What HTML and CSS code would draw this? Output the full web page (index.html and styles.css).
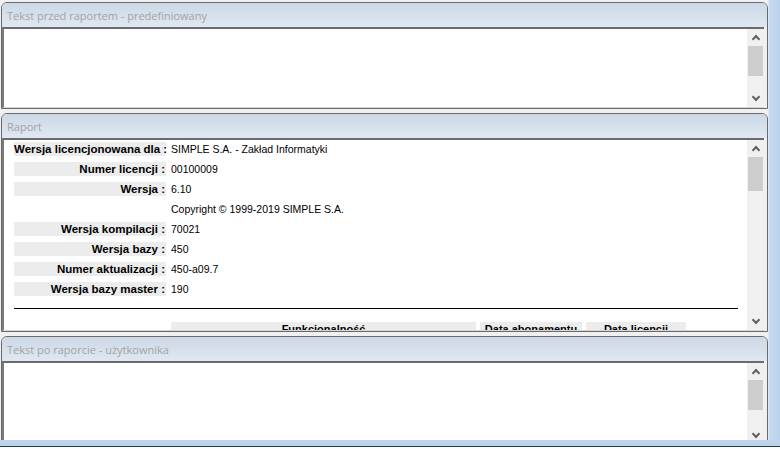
FILE: index.html
```html
<!DOCTYPE html>
<html lang="pl">
<head>
    <meta charset="UTF-8">
    <title>Raport</title>
    <link rel="stylesheet" href="styles.css">
</head>
<body>
    <div class="screen">
        <div class="main">
            <!-- tekst przed raportem -->
            <div class="panel panel-top">
                <div class="panel-title">Tekst przed raportem - predefiniowany</div>
                <div class="panel-body">
                    <div class="area"></div>
                    <div class="scrollbar">
                        <span class="arrow up"></span>
                        <span class="thumb"></span>
                        <span class="arrow down"></span>
                    </div>
                </div>
            </div>

            <!-- raport -->
            <div class="panel panel-report">
                <div class="panel-title">Raport</div>
                <div class="panel-body">
                    <div class="area report">
                        <div class="row"><span class="label">Wersja licencjonowana dla :</span><span class="value">SIMPLE S.A. - Zakład Informatyki</span></div>
                        <div class="row"><span class="label">Numer licencji :</span><span class="value">00100009</span></div>
                        <div class="row"><span class="label">Wersja :</span><span class="value">6.10</span></div>
                        <div class="row"><span class="label empty"></span><span class="value">Copyright © 1999-2019 SIMPLE S.A.</span></div>
                        <div class="row"><span class="label">Wersja kompilacji :</span><span class="value">70021</span></div>
                        <div class="row"><span class="label">Wersja bazy :</span><span class="value">450</span></div>
                        <div class="row"><span class="label">Numer aktualizacji :</span><span class="value">450-a09.7</span></div>
                        <div class="row"><span class="label">Wersja bazy master :</span><span class="value">190</span></div>
                        <hr class="sep">
                        <div class="table-head">
                            <span class="th th-func">Funkcjonalność</span>
                            <span class="th th-date">Data abonamentu</span>
                            <span class="th th-lic">Data licencji</span>
                        </div>
                    </div>
                    <div class="scrollbar">
                        <span class="arrow up"></span>
                        <span class="thumb"></span>
                        <span class="arrow down"></span>
                    </div>
                </div>
            </div>

            <!-- tekst po raporcie -->
            <div class="panel panel-bottom">
                <div class="panel-title">Tekst po raporcie - użytkownika</div>
                <div class="panel-body">
                    <div class="area"></div>
                    <div class="scrollbar">
                        <span class="arrow up"></span>
                        <span class="thumb"></span>
                        <span class="arrow down"></span>
                    </div>
                </div>
            </div>
        </div>
        <div class="frame-right"></div>
        <div class="frame-bottom"></div>
    </div>
</body>
</html>
```

FILE: styles.css
```css
/* ogólne */
body {
    margin: 0;
    background: #ffffff;
    font-family: "Liberation Sans", Arial, sans-serif;
    font-size: 11px;
    color: #000;
}

.screen {
    display: grid;
    grid-template-columns: 768px 12px;
    grid-template-rows: 440px 9px;
    width: 780px;
    height: 449px;
    overflow: hidden;
}

.main {
    display: flex;
    flex-direction: column;
    gap: 4px;
    padding: 2px 0 0 1px;
    background: #f0f0f0;
    overflow: hidden;
}

.frame-right {
    background: linear-gradient(to right, #c7dbef, #b9d1ea);
    border-left: 1px solid #dce8f4;
}

.frame-bottom {
    grid-column: 1 / 3;
    background: #ffffff;
    border-top: 6px solid #bcd3ea;
    box-shadow: inset 0 1px 0 #1d3b4a;
}

/* panele */
.panel {
    display: flex;
    flex-direction: column;
    border: 1px solid #6a6a6a;
    border-radius: 6px 6px 0 0;
    background: #f0f0f0;
    box-sizing: border-box;
}

.panel-top { height: 107px; flex: none; }
.panel-report { height: 219px; flex: none; }
.panel-bottom { height: 110px; flex: none; }

.panel-title {
    height: 24px;
    flex: none;
    padding-left: 5px;
    line-height: 26px;
    font-family: "Open Sans", "Noto Sans", sans-serif;
    font-size: 11px;
    color: #a3a3a3;
    border-radius: 5px 5px 0 0;
    background: linear-gradient(#ccd8e6, #dfe8f2);
}

.panel-body {
    flex: 1;
    display: flex;
    min-height: 0;
    margin-right: 3px;
    border-top: 2px solid #6b6b6b;
    border-left: 2px solid #7a7a7a;
    border-bottom: 1px solid #d6d6d6;
    background: #fff;
}

.area {
    flex: 1;
    overflow: hidden;
}

/* pasek przewijania */
.scrollbar {
    width: 17px;
    flex: none;
    display: flex;
    flex-direction: column;
    align-items: center;
    background: #f0f0f0;
}

.arrow {
    height: 17px;
    width: 17px;
    flex: none;
    position: relative;
}

.arrow::after {
    content: "";
    position: absolute;
    left: 6px;
    width: 4px;
    height: 4px;
    border-left: 2px solid #606060;
    border-top: 2px solid #606060;
}

.arrow.up::after { top: 7px; transform: rotate(45deg); }
.arrow.down::after { top: 4px; transform: rotate(225deg); }

.thumb {
    width: 15px;
    height: 30px;
    background: #cdcdcd;
}

.scrollbar .arrow.down { margin-top: auto; }

.panel-report .thumb { height: 34px; }

/* raport */
.report {
    padding: 0 0 0 10px;
    margin-top: -1px;
}

.row {
    display: flex;
    align-items: center;
    height: 20px;
}

.label {
    width: 151px;
    height: 14px;
    line-height: 14px;
    padding-right: 1px;
    text-align: right;
    font-size: 11.5px;
    font-weight: bold;
    background: #ececec;
    white-space: nowrap;
}

.label.empty { background: transparent; }

.value {
    padding-left: 5px;
    font-size: 10.5px;
    white-space: nowrap;
}

.sep {
    margin: 9px 9px 0 0;
    border: 0;
    border-top: 1px solid #000;
}

.table-head {
    display: flex;
    gap: 4px;
    margin: 13px 0 0 157px;
}

.th {
    height: 14px;
    line-height: 14px;
    background: #ececec;
    font-weight: bold;
    text-align: center;
    white-space: nowrap;
}

.th-func { width: 305px; }
.th-date { width: 102px; }
.th-lic { width: 100px; }
```
